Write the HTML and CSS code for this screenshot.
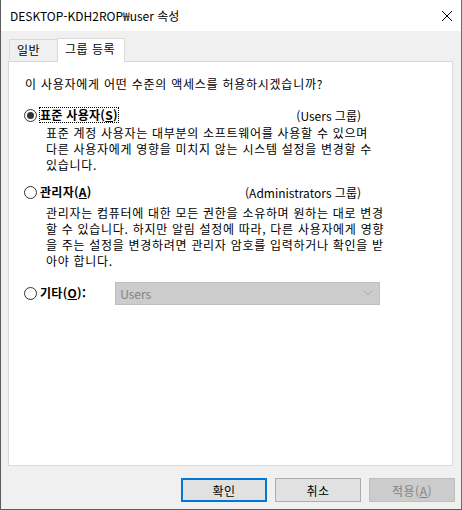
FILE: index.html
```html
<!DOCTYPE html>
<html lang="ko">
<head>
<meta charset="utf-8">
<link rel="stylesheet" href="styles.css">
</head>
<body>
<div class="window">
  <div class="titlebar">
    <span class="title">DESKTOP-KDH2ROP₩user 속성</span>
    <svg class="close" width="12" height="12" viewBox="0 0 12 12"><path d="M1 1 L11 11 M11 1 L1 11" stroke="#000" stroke-width="1" fill="none" shape-rendering="crispEdges"/></svg>
  </div>
  <div class="body">
    <div class="tabs">
      <div class="tab">일반</div>
      <div class="tab active">그룹 등록</div>
    </div>
    <div class="panel">
      <p class="question">이 사용자에게 어떤 수준의 액세스를 허용하시겠습니까?</p>

      <div class="row row-std">
        <span class="radio checked"></span>
        <span class="label focus">표준 사용자(<u>S</u>)</span>
        <span class="group">(Users 그룹)</span>
      </div>
      <p class="desc desc-std">표준 계정 사용자는 대부분의 소프트웨어를 사용할 수 있으며<br>다른 사용자에게 영향을 미치지 않는 시스템 설정을 변경할 수<br>있습니다.</p>

      <div class="row row-admin">
        <span class="radio"></span>
        <span class="label">관리자(<u>A</u>)</span>
        <span class="group">(Administrators 그룹)</span>
      </div>
      <p class="desc desc-admin">관리자는 컴퓨터에 대한 모든 권한을 소유하며 원하는 대로 변경<br>할 수 있습니다. 하지만 알림 설정에 따라, 다른 사용자에게 영향<br>을 주는 설정을 변경하려면 관리자 암호를 입력하거나 확인을 받<br>아야 합니다.</p>

      <div class="row row-other">
        <span class="radio"></span>
        <span class="label">기타(<u>O</u>):</span>
        <div class="combo">
          <span>Users</span>
          <svg width="10" height="6" viewBox="0 0 10 6"><path d="M0.5 0.5 L5 5 L9.5 0.5" stroke="#a6a6a6" stroke-width="1" fill="none"/></svg>
        </div>
      </div>
    </div>
    <div class="buttons">
      <div class="btn default">확인</div>
      <div class="btn">취소</div>
      <div class="btn disabled">적용(<u>A</u>)</div>
    </div>
  </div>
</div>
</body>
</html>
```

FILE: styles.css
```css
* { box-sizing: border-box; }
html, body { margin: 0; padding: 0; }
body {
  font-family: "Noto Sans CJK KR", "Noto Sans", sans-serif;
  font-size: 12px;
  color: #000;
  background: #fff;
}
.window {
  width: 462px;
  height: 510px;
  border-left: 1px solid #5c5c5c;
  border-right: 1px solid #6c6c6c;
  border-bottom: 1px solid #5c5c5c;
  display: flex;
  flex-direction: column;
}
.titlebar {
  height: 31px;
  background: #fff;
  display: flex;
  align-items: center;
  padding-left: 9px;
  padding-right: 8px;
  justify-content: space-between;
}
.title { font-size: 12px; line-height: 16px; }
.close { display: block; }
.body {
  flex: 1;
  background: #f0f0f0;
  display: flex;
  flex-direction: column;
}
.tabs {
  display: flex;
  align-items: flex-end;
  margin-top: 8px;
  margin-left: 8px;
  height: 22px;
  position: relative;
  z-index: 1;
}
.tab {
  height: 21px;
  padding: 0 7px;
  border: 1px solid #d9d9d9;
  border-bottom: none;
  background: #f0f0f0;
  line-height: 19px;
  margin-bottom: 1px;
  letter-spacing: 0.5px;
}
.tab:first-child { width: 48px; border-right: none; }
.tab.active {
  height: 24px;
  width: 68px;
  background: #fff;
  margin-bottom: -1px;
  padding-left: 7px;
  line-height: 20px;
}
.panel {
  margin: 0 8px 0 7px;
  height: 405px;
  background: #fff;
  border: 1px solid #d9d9d9;
  padding: 14px 0 0 16px;
}
.question { margin: 0; line-height: 15px; letter-spacing: 0.75px; }
.row {
  display: flex;
  align-items: center;
  height: 16px;
}
.row-std { margin-top: 16px; }
.row-admin { margin-top: 11px; }
.row-other { margin-top: 13px; height: 22px; }
.radio {
  width: 13px;
  height: 13px;
  border: 1px solid #333;
  border-radius: 50%;
  margin-left: -1px;
  margin-right: 3px;
  flex: none;
  display: flex;
  align-items: center;
  justify-content: center;
}
.radio.checked::after {
  content: "";
  width: 7px;
  height: 7px;
  border-radius: 50%;
  background: #333;
}
.label { font-weight: bold; line-height: 14px; letter-spacing: 0.3px; }
.focus { outline: 1px dotted #000; outline-offset: 0; }
.group { margin-left: auto; margin-right: 91px; }
.desc {
  margin: 2px 0 0 21px;
  line-height: 16px;
  letter-spacing: 0.7px;
}
.desc-admin { margin-top: 5px; }
.combo {
  margin-left: 29px;
  width: 265px;
  height: 23px;
  background: #cccccc;
  border: 1px solid #bfbfbf;
  color: #838383;
  display: flex;
  align-items: center;
  justify-content: space-between;
  padding: 0 6px 0 4px;
}
.combo svg { display: block; }
.buttons {
  display: flex;
  justify-content: flex-end;
  gap: 8px;
  margin-top: 12px;
  margin-right: 6px;
}
.btn {
  width: 86px;
  height: 24px;
  background: #e1e1e1;
  border: 1px solid #adadad;
  display: flex;
  align-items: center;
  justify-content: center;
  letter-spacing: 0.5px;
}
.btn.default { border: 2px solid #0078d7; }
.btn.disabled { background: #cccccc; border-color: #bfbfbf; color: #838383; }
u { text-decoration: underline; text-underline-offset: 1px; }
```
